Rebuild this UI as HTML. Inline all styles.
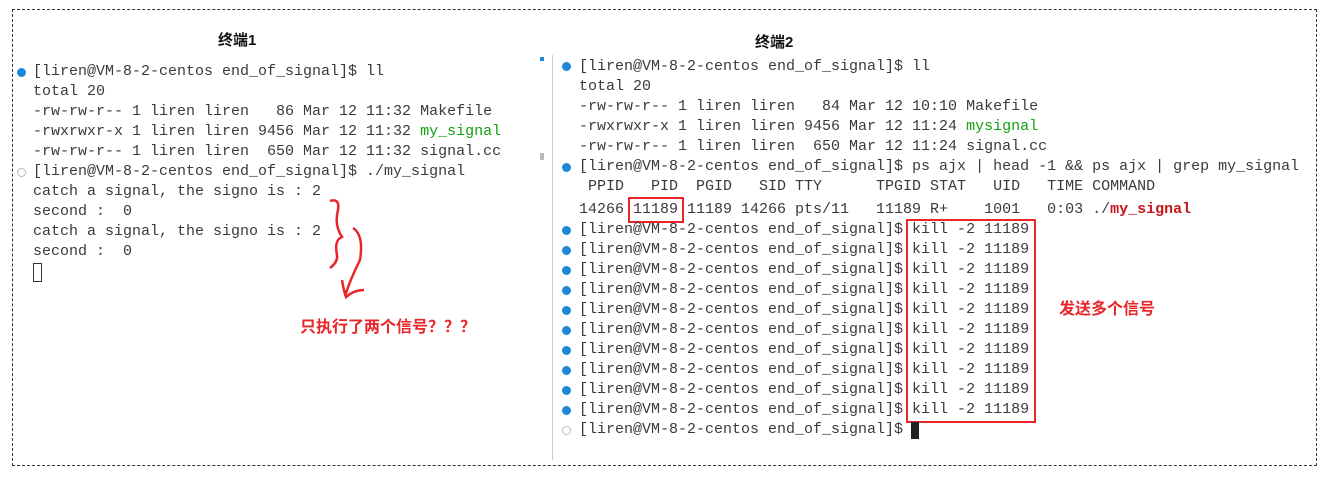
<!DOCTYPE html><html><head><meta charset="utf-8"><style>
body{margin:0;width:1330px;height:477px;background:#fff;position:relative;overflow:hidden;font-family:"Liberation Mono",monospace;font-size:15px;color:#3a3a3a}
.l{position:absolute;white-space:pre;line-height:20px;height:20px}
.d{position:absolute;width:9px;height:9px;border-radius:50%;background:#1e88d8}
.o{position:absolute;width:7px;height:7px;border-radius:50%;border:1px solid #bbb}
.t{position:absolute;font-family:"Liberation Sans","Noto Sans CJK SC",sans-serif;font-weight:bold;font-size:15px;color:#111}
.r{position:absolute;font-family:"Liberation Sans","Noto Sans CJK SC",sans-serif;font-weight:bold;font-size:16px;color:#e8262a}
.g{color:#13a10e}.b{position:absolute;border:2px solid #e8262a}
</style></head><body>
<div style="position:absolute;left:12px;top:9px;width:1303px;height:455px;border:1px dashed #333"></div>
<div style="position:absolute;left:552px;top:55px;width:1px;height:405px;background:#ccc"></div>
<div style="position:absolute;left:540px;top:57px;width:4px;height:4px;background:#1e88d8"></div>
<div style="position:absolute;left:540px;top:153px;width:4px;height:7px;background:#bbb"></div>
<div class="t" style="left:218px;top:29px">终端1</div>
<div class="t" style="left:755px;top:31px">终端2</div>

<div class="d" style="left:17px;top:68px"></div>
<div class="l" style="left:33px;top:62px">[liren@VM-8-2-centos end_of_signal]$ ll</div>
<div class="l" style="left:33px;top:82px">total 20</div>
<div class="l" style="left:33px;top:102px">-rw-rw-r-- 1 liren liren   86 Mar 12 11:32 Makefile</div>
<div class="l" style="left:33px;top:122px">-rwxrwxr-x 1 liren liren 9456 Mar 12 11:32 <span class="g">my_signal</span></div>
<div class="l" style="left:33px;top:142px">-rw-rw-r-- 1 liren liren  650 Mar 12 11:32 signal.cc</div>
<div class="o" style="left:17px;top:168px"></div>
<div class="l" style="left:33px;top:162px">[liren@VM-8-2-centos end_of_signal]$ ./my_signal</div>
<div class="l" style="left:33px;top:182px">catch a signal, the signo is : 2</div>
<div class="l" style="left:33px;top:202px">second :  0</div>
<div class="l" style="left:33px;top:222px">catch a signal, the signo is : 2</div>
<div class="l" style="left:33px;top:242px">second :  0</div>
<div style="position:absolute;left:33px;top:263px;width:7px;height:17px;border:1px solid #333"></div>
<svg style="position:absolute;left:320px;top:180px" width="60" height="125"><path d="M10 21 Q20 18 18 30 Q14 45 22 57 Q14 60 17 75 Q18 82 10 88" stroke="#e8262a" stroke-width="2.5" fill="none"/><path d="M33 48 Q44 55 40 80 Q30 100 25 116 M22 100 Q24 112 26 117 Q34 110 44 110" stroke="#e8262a" stroke-width="2.5" fill="none"/></svg>
<div class="r" style="left:300px;top:313px">只执行了两个信号？？？</div>

<div class="d" style="left:562px;top:62px"></div>
<div class="l" style="left:579px;top:57px">[liren@VM-8-2-centos end_of_signal]$ ll</div>
<div class="l" style="left:579px;top:77px">total 20</div>
<div class="l" style="left:579px;top:97px">-rw-rw-r-- 1 liren liren   84 Mar 12 10:10 Makefile</div>
<div class="l" style="left:579px;top:117px">-rwxrwxr-x 1 liren liren 9456 Mar 12 11:24 <span class="g">mysignal</span></div>
<div class="l" style="left:579px;top:137px">-rw-rw-r-- 1 liren liren  650 Mar 12 11:24 signal.cc</div>
<div class="d" style="left:562px;top:163px"></div>
<div class="l" style="left:579px;top:157px">[liren@VM-8-2-centos end_of_signal]$ ps ajx | head -1 &amp;&amp; ps ajx | grep my_signal</div>
<div class="l" style="left:579px;top:177px"> PPID   PID  PGID   SID TTY      TPGID STAT   UID   TIME COMMAND</div>
<div class="l" style="left:579px;top:200px">14266 11189 11189 14266 pts/11   11189 R+    1001   0:03 ./<b style="color:#c5161d">my_signal</b></div>
<div class="b" style="left:628px;top:197px;width:52px;height:22px"></div>
<div class="l" style="left:579px;top:220px">[liren@VM-8-2-centos end_of_signal]$ kill -2 11189</div>
<div class="l" style="left:579px;top:240px">[liren@VM-8-2-centos end_of_signal]$ kill -2 11189</div>
<div class="l" style="left:579px;top:260px">[liren@VM-8-2-centos end_of_signal]$ kill -2 11189</div>
<div class="l" style="left:579px;top:280px">[liren@VM-8-2-centos end_of_signal]$ kill -2 11189</div>
<div class="l" style="left:579px;top:300px">[liren@VM-8-2-centos end_of_signal]$ kill -2 11189</div>
<div class="l" style="left:579px;top:320px">[liren@VM-8-2-centos end_of_signal]$ kill -2 11189</div>
<div class="l" style="left:579px;top:340px">[liren@VM-8-2-centos end_of_signal]$ kill -2 11189</div>
<div class="l" style="left:579px;top:360px">[liren@VM-8-2-centos end_of_signal]$ kill -2 11189</div>
<div class="l" style="left:579px;top:380px">[liren@VM-8-2-centos end_of_signal]$ kill -2 11189</div>
<div class="l" style="left:579px;top:400px">[liren@VM-8-2-centos end_of_signal]$ kill -2 11189</div>
<div class="d" style="left:562px;top:226px"></div><div class="d" style="left:562px;top:246px"></div><div class="d" style="left:562px;top:266px"></div><div class="d" style="left:562px;top:286px"></div><div class="d" style="left:562px;top:306px"></div><div class="d" style="left:562px;top:326px"></div><div class="d" style="left:562px;top:346px"></div><div class="d" style="left:562px;top:366px"></div><div class="d" style="left:562px;top:386px"></div><div class="d" style="left:562px;top:406px"></div>
<div class="b" style="left:906px;top:219px;width:126px;height:200px"></div>
<div class="o" style="left:562px;top:426px"></div>
<div class="l" style="left:579px;top:420px">[liren@VM-8-2-centos end_of_signal]$ </div>
<div style="position:absolute;left:911px;top:422px;width:8px;height:17px;background:#222"></div>
<div class="r" style="left:1059px;top:295px">发送多个信号</div>
</body></html>
